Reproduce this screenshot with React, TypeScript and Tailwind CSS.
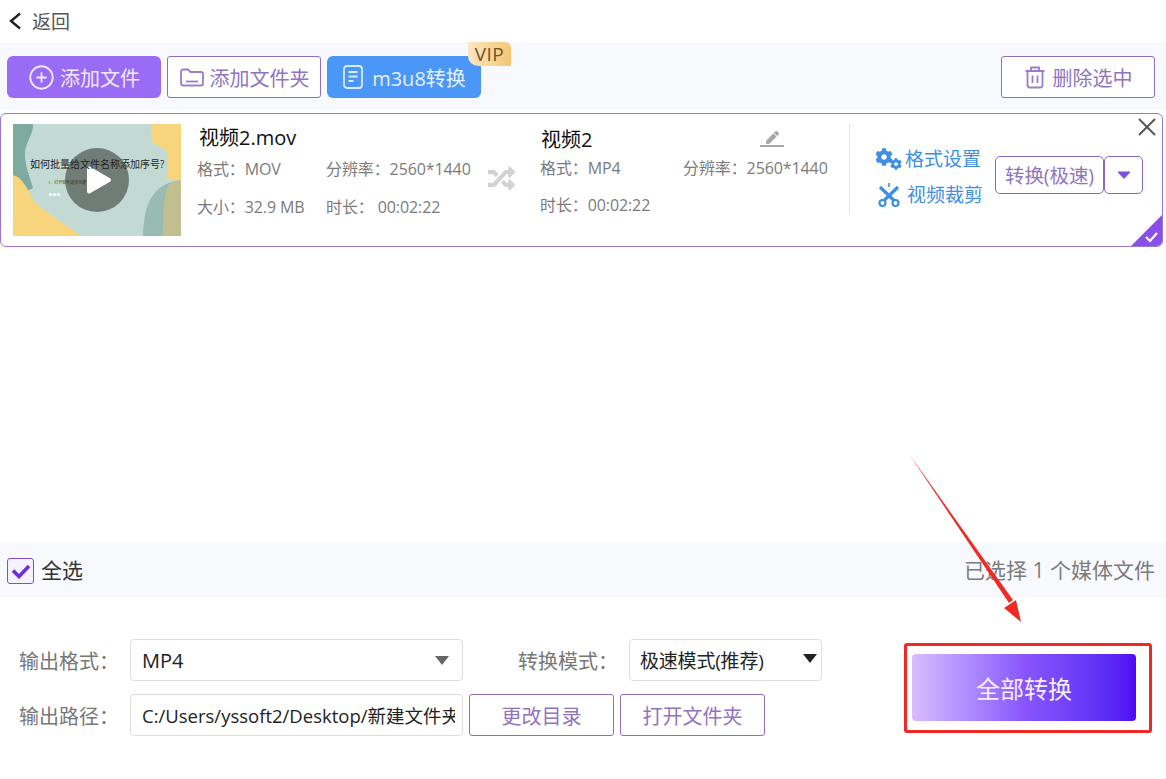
import { CirclePlus, X } from "lucide-react";
import { FaCog, FaPen, FaRandom } from "react-icons/fa";

const fontStack = "font-['Open_Sans','Noto_Sans_CJK_SC',sans-serif]";

function BackIcon() {
  return (
    <svg width="14" height="18" viewBox="0 0 14 18" fill="none" stroke="#222" strokeWidth="2.4">
      <path d="M12 1.5 3 9l9 7.5" />
    </svg>
  );
}

function FolderIcon() {
  return (
    <svg width="26" height="22" viewBox="0 0 26 22" fill="none" stroke="#9a7cd0" strokeWidth="1.8">
      <path d="M2 5.5a2 2 0 0 1 2-2h5l2.5 2.5H22a2 2 0 0 1 2 2v9.5a2 2 0 0 1-2 2H4a2 2 0 0 1-2-2z" />
      <path d="M7 15.5h12" />
    </svg>
  );
}

function DocIcon() {
  return (
    <svg width="22" height="26" viewBox="0 0 22 26" fill="none" stroke="#d8ecff" strokeWidth="1.8">
      <rect x="2" y="2" width="18" height="22" rx="3" />
      <path d="M6.5 8h9M6.5 12.5h9M6.5 17h5" />
    </svg>
  );
}

function TrashIcon() {
  return (
    <svg width="22" height="24" viewBox="0 0 22 24" fill="none" stroke="#9a7cd0" strokeWidth="1.8">
      <path d="M1.5 6h19M7 6V2.5h8V6" />
      <path d="M3.5 6v14a2.5 2.5 0 0 0 2.5 2.5h10a2.5 2.5 0 0 0 2.5-2.5V6" />
      <path d="M8.5 10.5v7.5M13.5 10.5v7.5" />
    </svg>
  );
}

function ScissorsIcon() {
  return (
    <svg width="24" height="26" viewBox="0 0 24 26" fill="none" stroke="#3f8fe0">
      <path d="M12 1v4" strokeWidth="1.6" />
      <path d="M3 5 17 18.5M21 5 7 18.5" strokeWidth="3.2" />
      <circle cx="5.5" cy="21" r="3" strokeWidth="2.2" />
      <circle cx="18.5" cy="21" r="3" strokeWidth="2.2" />
    </svg>
  );
}

function GearsIcon() {
  return (
    <span className="relative block w-[26px] h-[22px] shrink-0 text-[#3f8fe0]">
      <FaCog size={18} />
      <FaCog size={12} className="absolute left-[15px] top-[10px]" />
    </span>
  );
}

function Thumbnail() {
  return (
    <div className="relative w-[168px] h-[112px] shrink-0 overflow-hidden">
      <svg className="absolute inset-0" width="168" height="112" viewBox="0 0 168 112">
        <rect width="168" height="112" fill="#c3dad4" />
        <path d="M0 0h20c1 10-8 18-8 30 0 12 4 20 8 34L8 70 0 51z" fill="#7dab9f" />
        <path d="M0 51c8 2 14 12 18 21 4 9 14 14 27 24 8 6 16 10 22 16H0z" fill="#f8d57c" />
        <path d="M138 0h30v56h-13V29c-4-6-17-8-17-16z" fill="#f8d57c" />
        <path d="M168 56c-12 2-28 6-35 30-2 10-3 18-3 26h38z" fill="#98bcb4" />
        <path d="M168 56c-8 1-13 2-15 12-3 12-3 28-3 44h18z" fill="#c2bf8e" />
      </svg>
      <div className="absolute left-[52px] top-[24px] w-[64px] h-[64px] rounded-full bg-[#6f7d76] flex items-center justify-center">
        <svg width="26" height="30" viewBox="0 0 26 30" className="ml-[3px]">
          <path d="M3 3.5 23 15 3 26.5z" fill="#fff" stroke="#fff" strokeWidth="4" strokeLinejoin="round" />
        </svg>
      </div>
      <div className="absolute left-[17px] top-[32px] text-[10px] leading-4 text-[#222] whitespace-nowrap">
        如何批量给文件名称添加序号?
      </div>
      <div className="absolute left-[35px] top-[56px] text-[4px] leading-[6px] text-[#333] whitespace-nowrap">
        1、打开软件选择功能
      </div>
      <div className="absolute left-[36px] top-[69px] flex gap-[1px]">
        <span className="w-[3px] h-[3px] rounded-full bg-white" />
        <span className="w-[3px] h-[3px] rounded-full bg-white" />
        <span className="w-[3px] h-[3px] rounded-full bg-white" />
      </div>
    </div>
  );
}

function Info({ label, value, width }: { label: string; value: string; width: string }) {
  return (
    <div className={`${width} shrink-0 whitespace-nowrap text-[16px] leading-6 text-[#7b7b7b] tracking-[-0.1px]`}>
      {label}：<span>{value}</span>
    </div>
  );
}

export default function App() {
  return (
    <div className={`${fontStack} relative w-[1166px] h-[779px] bg-white overflow-hidden flex flex-col`}>
      {/* back */}
      <div className="h-[42px] flex items-center pl-[8px] shrink-0">
        <BackIcon />
        <span className="ml-[10px] pt-[2px] text-[19px] text-[#555]">返回</span>
      </div>

      {/* toolbar */}
      <div className="h-[68px] shrink-0 bg-[#f8f9fd] flex items-start pt-[14px] pl-[7px] pr-[11px]">
        <button className="w-[154px] h-[42px] rounded-[6px] bg-[#9a6cf5] text-[#f1e8ff] text-[20px] flex items-center justify-center gap-[5px]">
          <CirclePlus size={27} strokeWidth={1.6} />
          <span className="pt-[3px]">添加文件</span>
        </button>
        <button className="ml-[6px] w-[154px] h-[42px] rounded-[3px] bg-white border border-[#8e6fbd] text-[#8f74c0] text-[20px] flex items-center justify-center gap-[5px]">
          <FolderIcon />
          <span className="pt-[3px]">添加文件夹</span>
        </button>
        <div className="relative ml-[6px]">
          <button className="w-[154px] h-[42px] rounded-[6px] bg-[#4b97f8] text-[#e4f1ff] text-[20px] flex items-center justify-center gap-[8px]">
            <DocIcon />
            <span className="pt-[3px]">m3u8转换</span>
          </button>
          <span className="absolute left-[141px] top-[-14px] w-[43px] h-[24px] rounded-tr-[6px] rounded-bl-[10px] bg-gradient-to-r from-[#fbe6c2] to-[#f5c672] text-[#6e5326] text-[19px] tracking-[0.5px] leading-6 text-center">
            VIP
          </span>
        </div>
        <button className="ml-auto w-[154px] h-[42px] rounded-[3px] bg-white border border-[#8e6fbd] text-[#8f74c0] text-[20px] flex items-center justify-center gap-[7px]">
          <TrashIcon />
          <span className="pt-[3px]">删除选中</span>
        </button>
      </div>

      {/* file card */}
      <div className="relative mt-[3px] w-[1163px] h-[134px] shrink-0 rounded-[6px] border-[1.5px] border-[#9a78d0] bg-white overflow-hidden flex items-start pl-[12px] pt-[10px]">
        <Thumbnail />
        <div className="ml-[16px] w-[290px] shrink-0">
          <div className="ml-[2px] text-[20px] leading-7 text-[#111]">视频2.mov</div>
          <div className="flex mt-[5px]">
            <Info label="格式" value="MOV" width="w-[129px]" />
            <Info label="分辨率" value="2560*1440" width="w-[150px]" />
          </div>
          <div className="flex mt-[14px]">
            <Info label="大小" value="32.9 MB" width="w-[129px]" />
            <Info label="时长" value=" 00:02:22" width="w-[150px]" />
          </div>
        </div>
        <div className="w-[53px] shrink-0 mt-[41px] pl-[1px] text-[#d2d2d2]">
          <FaRandom size={27} />
        </div>
        <div className="w-[290px] shrink-0">
          <div className="flex items-center">
            <div className="w-[219px] ml-[1px] pt-[2px] text-[20px] leading-7 text-[#111]">视频2</div>
            <div className="flex flex-col items-center text-[#a8a8a8]">
              <FaPen size={13} />
              <div className="w-[24px] h-[1.5px] bg-[#a8a8a8] mt-[1px]" />
            </div>
          </div>
          <div className="flex mt-[2px]">
            <Info label="格式" value="MP4" width="w-[143px]" />
            <Info label="分辨率" value="2560*1440" width="w-[150px]" />
          </div>
          <div className="flex mt-[13px]">
            <Info label="时长" value="00:02:22" width="w-[143px]" />
          </div>
        </div>
        <div className="ml-[19px] w-px h-[90px] bg-[#e4e4e4] shrink-0" />
        <div className="ml-[25px] mt-[22px] flex flex-col gap-[10px] w-[120px] shrink-0">
          <div className="h-[26px] flex items-center gap-[4px] text-[#3f8fe0] text-[19px] whitespace-nowrap">
            <GearsIcon />
            格式设置
          </div>
          <div className="h-[26px] flex items-center gap-[6px] text-[#3f8fe0] text-[19px] whitespace-nowrap ml-[2px]">
            <ScissorsIcon />
            视频裁剪
          </div>
        </div>
        <div className="mt-[32px] flex">
          <button className="w-[109px] h-[38px] rounded-[5px] border-[1.5px] border-[#8a66c8] pt-[2px] text-[#8f74c0] text-[19.5px] tracking-[-0.1px] whitespace-nowrap">
            转换(极速)
          </button>
          <button className="w-[39px] h-[38px] rounded-[5px] border-[1.5px] border-[#8a66c8] flex items-center justify-center">
            <svg width="14" height="8" viewBox="0 0 14 8"><path d="M1 1h12L7 7.5z" fill="#7c4fe0" stroke="#7c4fe0" strokeLinejoin="round" /></svg>
          </button>
        </div>
        <X className="absolute right-0 top-[-2px]" size={30} color="#555" strokeWidth={1.5} />
        <svg className="absolute right-0 bottom-0" width="31" height="31" viewBox="0 0 31 31">
          <path d="M31 0v31H0z" fill="#8a4fe8" />
          <path d="M15 22l4 4 7-8" fill="none" stroke="#fff" strokeWidth="2.2" />
        </svg>
      </div>

      <div className="flex-1" />

      {/* select all bar */}
      <div className="h-[55px] shrink-0 bg-[#f8f9fd] flex items-center pl-[7px] pr-[11px]">
        <div className="w-[27px] h-[26px] rounded-[3px] border-[1.5px] border-[#7c4fd0] bg-[#f6f1ff] flex items-center justify-center">
          <svg width="20" height="16" viewBox="0 0 20 16"><path d="M2 7.5l6 6L18 3" fill="none" stroke="#6d2ee0" strokeWidth="3.6" /></svg>
        </div>
        <span className="ml-[7px] text-[21px] text-[#333]">全选</span>
        <span className="ml-auto pt-[1px] text-[21px] text-[#7c7c7c]">已选择 1 个媒体文件</span>
      </div>

      {/* output options */}
      <div className="h-[181px] shrink-0 flex items-start pl-[19px] pt-[41px]">
        <div className="flex flex-col gap-[13px]">
          <div className="flex items-center">
            <span className="w-[111px] pt-[3px] text-[20px] text-[#777]">输出格式：</span>
            <div className="w-[333px] h-[42px] rounded-[4px] border border-[#dedede] flex items-center justify-between pl-[11px] pr-[13px] text-[20px] text-[#222]">
              <span className="pt-[2px]">MP4</span>
              <svg width="14" height="9" viewBox="0 0 14 9"><path d="M0 0h14L7 9z" fill="#666" /></svg>
            </div>
            <span className="ml-[55px] w-[111px] pt-[3px] text-[20px] text-[#777]">转换模式：</span>
            <div className="w-[193px] h-[42px] rounded-[4px] border border-[#dedede] flex items-center justify-between pl-[10px] pr-[4px] text-[19px] text-[#222] whitespace-nowrap">
              <span className="pt-[3px] tracking-[-0.2px]">极速模式(推荐)</span>
              <svg width="14" height="9" viewBox="0 0 14 9" className="mb-[4px]"><path d="M0 0h14L7 9z" fill="#222" /></svg>
            </div>
          </div>
          <div className="flex items-center">
            <span className="w-[111px] pt-[3px] text-[20px] text-[#777]">输出路径：</span>
            <div className="w-[333px] h-[42px] rounded-[4px] border border-[#dedede] flex items-center pl-[11px] pr-[7px] text-[18.5px] text-[#222]">
              <div className="overflow-hidden whitespace-nowrap pt-[2px]">C:/Users/yssoft2/Desktop/新建文件夹</div>
            </div>
            <button className="ml-[6px] w-[145px] h-[42px] rounded-[3px] border border-[#8e6fbd] pt-[3px] text-[#8f74c0] text-[20px]">更改目录</button>
            <button className="ml-[6px] w-[145px] h-[42px] rounded-[3px] border border-[#8e6fbd] pt-[3px] text-[#8f74c0] text-[20px]">打开文件夹</button>
          </div>
        </div>
        <div className="ml-[82px] mt-[4px] w-[248px] h-[90px] rounded-[3px] border-[3px] border-[#ee2a24] pl-[5px] pt-[8px]">
          <button className="w-[224px] h-[67px] rounded-[4px] pt-[2px] bg-gradient-to-r from-[#d9bcff] via-[#8a55fb] to-[#4f08f5] text-[#f5efff] text-[24px]">
            全部转换
          </button>
        </div>
      </div>

      {/* annotation arrow */}
      <svg className="absolute left-[900px] top-[450px] pointer-events-none" width="130" height="180" viewBox="0 0 130 180">
        <path d="M9 4 109 153 113 150z" fill="#ef2b25" />
        <path d="M121 172 104 158 116 150z" fill="#ef2b25" />
      </svg>
    </div>
  );
}
